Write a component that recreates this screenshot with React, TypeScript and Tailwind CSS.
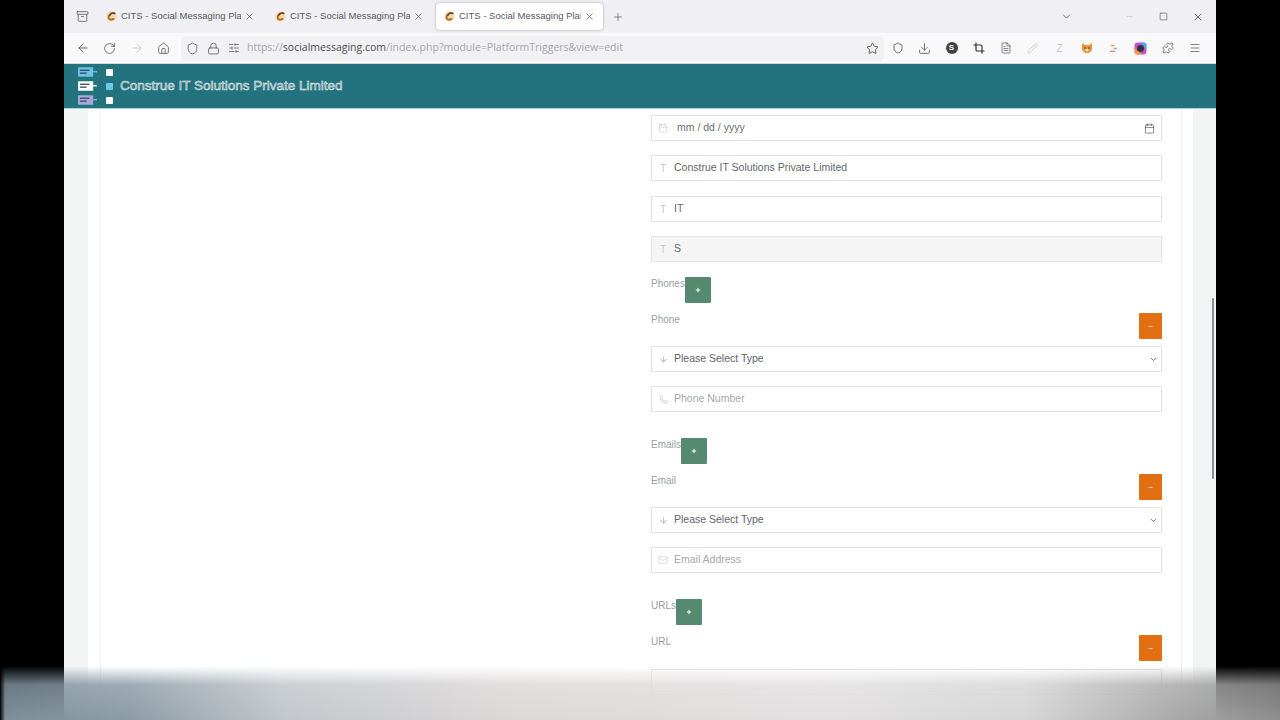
import {
  ArrowLeft,
  ArrowRight,
  Calendar,
  ChevronDown,
  Download,
  FileText,
  Home,
  Lock,
  Mail,
  Menu,
  Minus,
  Pencil,
  Phone,
  Plus,
  Puzzle,
  RotateCw,
  Shield,
  SlidersHorizontal,
  Square,
  Star,
  X,
  Crop,
  Archive,
  ArrowDown,
} from "lucide-react";
import type { ReactNode } from "react";

const tabs = [
  { id: 1, active: false },
  { id: 2, active: false },
  { id: 3, active: true },
];

function Favicon() {
  return (
    <svg viewBox="0 0 12 12" className="w-[11px] h-[11px] shrink-0">
      <circle cx="6" cy="6" r="5.5" fill="#f3d9a8" />
      <path d="M9.5 2.6C7 1.2 3.4 3 2.8 6.4c-.4 2.7 2.6 3.8 5.4 2.2" fill="none" stroke="#b5651d" strokeWidth="2" strokeLinecap="round" />
      <path d="M9.5 2.6C7.5 1.6 5 2.8 4.2 5" fill="none" stroke="#333" strokeWidth="1.1" strokeLinecap="round" />
    </svg>
  );
}

function Tab({ active }: { active: boolean }) {
  return (
    <div
      className={
        active
          ? "w-[167px] h-[27px] flex items-center pl-[8px] pr-[8px] bg-white rounded shadow-[0_0_3px_rgba(0,0,0,0.3)]"
          : "w-[165px] h-[27px] flex items-center pl-[8px] pr-[8px]"
      }
    >
      <Favicon />
      <span className="ml-[4px] flex-1 overflow-hidden whitespace-nowrap text-[9.5px] text-[#555b60]">
        CITS - Social Messaging Platform
      </span>
      <X className="w-[11px] h-[11px] ml-[3px] text-[#555]" strokeWidth={1.5} />
    </div>
  );
}

function ToolIcon({ children }: { children: ReactNode }) {
  return <div className="w-[27px] h-[27px] flex items-center justify-center shrink-0 text-[#5b5b66]">{children}</div>;
}

function LogoRow({ color, dot }: { color: string; dot: string }) {
  return (
    <div className="flex items-center gap-[9px] h-[14px]">
      <svg viewBox="0 0 20 10" className="w-[19px] h-[10px]">
        <rect x="0" y="0" width="16" height="10" fill={color} />
        <rect x="2" y="2.5" width="10" height="1.4" fill="#33505c" />
        <rect x="2" y="5.5" width="7" height="1.4" fill="#33505c" />
        <path d="M16 4h4v1.4h-4z" fill={color} />
      </svg>
      <div className="w-[7px] h-[7px] rounded-[1px]" style={{ backgroundColor: dot }} />
    </div>
  );
}

function Field({
  icon,
  children,
  className = "",
}: {
  icon: ReactNode;
  children: ReactNode;
  className?: string;
}) {
  return (
    <div className={`h-[26px] flex items-center border border-[#e2e5e8] text-[10.5px] ${className}`}>
      <div className="w-[22px] flex justify-center shrink-0 text-[#c4c8cc]">{icon}</div>
      {children}
    </div>
  );
}

function GreenBtn() {
  return (
    <div className="w-[26px] h-[26px] bg-[#568a70] rounded-[1px] flex items-center justify-center">
      <Plus className="w-[6px] h-[6px] text-white" strokeWidth={4} />
    </div>
  );
}

function OrangeBtn() {
  return (
    <div className="w-[23px] h-[26px] bg-[#e36f13] rounded-[1px] flex items-center justify-center">
      <Minus className="w-[5px] h-[5px] text-[#ffe9d2]" strokeWidth={4} />
    </div>
  );
}

function Section({
  title,
  label,
  placeholder,
  icon,
  last,
}: {
  title: string;
  label: string;
  placeholder?: string;
  icon?: ReactNode;
  last?: boolean;
}) {
  return (
    <div className={last ? "" : "mb-[26px]"}>
      <div className="flex h-[26px]">
        <span className="text-[10px] leading-[14px] text-[#9a9ea3]">{title}</span>
        <GreenBtn />
      </div>
      <div className="mt-[10px] flex justify-between">
        <span className="text-[10px] leading-[14px] text-[#9a9ea3]">{label}</span>
        <OrangeBtn />
      </div>
      {last ? (
        <div className="mt-[8px] h-[26px] border border-[#e2e5e8]" />
      ) : (
        <>
          <Field icon={<ArrowDown className="w-[9px] h-[9px]" strokeWidth={3} />} className="mt-[7px]">
            <span className="flex-1 text-[#5f6468]">Please Select Type</span>
            <ChevronDown className="w-[9px] h-[9px] mr-[3px] text-[#666]" strokeWidth={2.5} />
          </Field>
          <Field icon={icon} className="mt-[14px]">
            <span className="text-[#a4a8ac]">{placeholder}</span>
          </Field>
        </>
      )}
    </div>
  );
}

export default function App() {
  return (
    <div className="relative w-[1280px] h-[720px] bg-black flex justify-center overflow-hidden font-['Liberation_Sans',sans-serif]">
      <div className="w-[1152px] h-[720px] flex flex-col bg-white">
        {/* Tab strip */}
        <div className="h-[33px] bg-[#f0f0f4] flex items-center shrink-0">
          <div className="w-[34px] flex justify-end pr-[9px]">
            <Archive className="w-[13px] h-[13px] text-[#5b5b66]" strokeWidth={1.5} />
          </div>
          {tabs.map((t) => (
            <div key={t.id} className="mr-[4px]">
              <Tab active={t.active} />
            </div>
          ))}
          <Plus className="w-[12px] h-[12px] ml-[5px] text-[#666]" strokeWidth={1.5} />
          <div className="flex-1" />
          <ChevronDown className="w-[13px] h-[13px] text-[#555] mr-[52px]" strokeWidth={1.5} />
          <Minus className="w-[9px] h-[9px] text-[#bbb] mr-[25px]" strokeWidth={1.5} />
          <Square className="w-[9px] h-[9px] text-[#444] mr-[24px]" strokeWidth={1.5} />
          <X className="w-[12px] h-[12px] text-[#444] mr-[12px]" strokeWidth={1.5} />
        </div>

        {/* Toolbar */}
        <div className="h-[31px] bg-[#f9f9fb] flex items-center pl-[5px] pr-[5px] shrink-0 border-b border-[#d6dadb]">
          <ToolIcon><ArrowLeft className="w-[14px] h-[14px]" strokeWidth={1.6} /></ToolIcon>
          <ToolIcon><RotateCw className="w-[13px] h-[13px]" strokeWidth={1.6} /></ToolIcon>
          <ToolIcon><ArrowRight className="w-[14px] h-[14px] text-[#c4c4ca]" strokeWidth={1.6} /></ToolIcon>
          <ToolIcon><Home className="w-[13px] h-[13px]" strokeWidth={1.5} /></ToolIcon>
          <div className="ml-[4px] w-[703px] h-[25px] bg-[#f1f1f4] rounded flex items-center shrink-0">
            <Shield className="w-[13px] h-[13px] ml-[5px] text-[#5b5b66]" strokeWidth={1.5} />
            <Lock className="w-[13px] h-[13px] ml-[8px] text-[#5b5b66]" strokeWidth={1.5} />
            <SlidersHorizontal className="w-[12px] h-[12px] ml-[8px] text-[#5b5b66]" strokeWidth={1.5} />
            <span className="ml-[7px] text-[10.5px] text-[#a3a6ae] whitespace-nowrap font-['Open_Sans',sans-serif]">
              https://<span className="text-[#4a4d55]">socialmessaging.com</span>/index.php?module=PlatformTriggers&amp;view=edit
            </span>
            <div className="flex-1" />
            <Star className="w-[13px] h-[13px] mr-[5px] text-[#444]" strokeWidth={1.5} />
          </div>
          <ToolIcon><Shield className="w-[12px] h-[12px]" strokeWidth={1.8} /></ToolIcon>
          <ToolIcon><Download className="w-[13px] h-[13px]" strokeWidth={1.6} /></ToolIcon>
          <ToolIcon>
            <div className="w-[12px] h-[12px] rounded-full bg-[#3f4145] text-white text-[8px] font-bold flex items-center justify-center">S</div>
          </ToolIcon>
          <ToolIcon><Crop className="w-[12px] h-[12px] text-[#333]" strokeWidth={2.4} /></ToolIcon>
          <ToolIcon><FileText className="w-[12px] h-[12px]" strokeWidth={1.5} /></ToolIcon>
          <ToolIcon><Pencil className="w-[11px] h-[11px] text-[#c9c9c9]" strokeWidth={2} /></ToolIcon>
          <ToolIcon><span className="text-[10px] text-[#c9c9c9]">Z</span></ToolIcon>
          <ToolIcon>
            <svg viewBox="0 0 12 12" className="w-[12px] h-[12px]">
              <path d="M1 1l3 2h4l3-2v7l-3 3H4L1 8z" fill="#e8973a" />
              <path d="M4 7h4l-2 3z" fill="#fbe6c8" />
              <circle cx="4" cy="6" r=".8" fill="#333" />
              <circle cx="8" cy="6" r=".8" fill="#333" />
            </svg>
          </ToolIcon>
          <ToolIcon>
            <svg viewBox="0 0 12 12" className="w-[11px] h-[11px]">
              <path d="M3 3h4" stroke="#f29b3d" strokeWidth="1.5" />
              <path d="M6 6h4" stroke="#7ab8d9" strokeWidth="1.5" />
              <path d="M2 9h6" stroke="#ef8f6f" strokeWidth="1.5" />
            </svg>
          </ToolIcon>
          <ToolIcon>
            <svg viewBox="0 0 12 12" className="w-[13px] h-[13px]">
              <rect x="0.5" y="0.5" width="11" height="11" rx="3" fill="#c94fd0" />
              <path d="M6 .5h3a2.500 2.500 0 0 1 2.500 2.500V7z" fill="#3fb6e8" />
              <path d="M.5 6v3A2.500 2.500 0 0 0 3 11.500h5z" fill="#f0a13a" />
              <circle cx="6" cy="6" r="3.200" fill="#2f3340" />
            </svg>
          </ToolIcon>
          <ToolIcon><Puzzle className="w-[12px] h-[12px]" strokeWidth={1.6} /></ToolIcon>
          <ToolIcon><Menu className="w-[12px] h-[12px]" strokeWidth={1.5} /></ToolIcon>
        </div>

        {/* App header */}
        <div className="h-[45px] bg-[#23737f] border-b border-[#a8d4d8] flex items-center pl-[14px] shrink-0">
          <div className="flex flex-col">
            <LogoRow color="#6cc0ea" dot="#ffffff" />
            <LogoRow color="#ffffff" dot="#6cc6e6" />
            <LogoRow color="#a9a8dc" dot="#ffffff" />
          </div>
          <span className="ml-[7px] text-[13.5px] text-[#7f9ea4] [-webkit-text-stroke:0.5px_#e6eeee] whitespace-nowrap">
            Construe IT Solutions Private Limited
          </span>
        </div>

        {/* Page body */}
        <div className="relative flex-1 min-h-0 overflow-hidden bg-[#f3f5f5] pl-[24px] pr-[23px]">
          <div className="h-full bg-white pl-[12px] pr-[11px]">
            <div className="h-full border-x border-[#f0f2f3] flex justify-end pr-[19px] pt-[6px]">
              <div className="w-[511px]">
                <Field icon={<Calendar className="w-[10px] h-[10px]" strokeWidth={1.5} />} className="mb-[14px]">
                  <span className="ml-[3px] flex-1 text-[#6a6e72]">mm / dd / yyyy</span>
                  <Calendar className="w-[11px] h-[11px] mr-[6px] text-[#555]" strokeWidth={1.5} />
                </Field>
                <Field icon={<span className="text-[10px]">T</span>} className="mb-[15px]">
                  <span className="text-[#63676b]">Construe IT Solutions Private Limited</span>
                </Field>
                <Field icon={<span className="text-[10px]">T</span>} className="mb-[14px] border-[#d8dadc]">
                  <span className="text-[#63676b]">IT</span>
                </Field>
                <Field icon={<span className="text-[10px]">T</span>} className="mb-[15px] bg-[#f5f5f5]">
                  <span className="text-[#63676b]">S</span>
                </Field>
                <Section title="Phones" label="Phone" placeholder="Phone Number" icon={<Phone className="w-[9px] h-[9px]" strokeWidth={2} />} />
                <Section title="Emails" label="Email" placeholder="Email Address" icon={<Mail className="w-[10px] h-[10px]" strokeWidth={1.5} />} />
                <Section title="URLs" label="URL" last />
              </div>
            </div>
          </div>
          {/* Scrollbar thumb */}
          <div className="absolute left-[1148px] top-[189px] w-[2px] h-[181px] bg-[#8d8f92] rounded-full" />
        </div>
      </div>

      {/* Video bottom fade */}
      <div className="absolute left-0 bottom-0 w-[1280px] h-[54px] bg-[linear-gradient(to_right,#000_0,#7f909b_0.4%,#8b9ba5_10%,#c2c6ca_22%,#dcd8d8_40%,#e2e0e0_65%,#d6d6d6_80%,#a8a8a8_92%,#8f8f8f_100%)] [mask-image:linear-gradient(to_bottom,transparent_0,rgba(0,0,0,0.85)_35%,black_100%)]" />
    </div>
  );
}
